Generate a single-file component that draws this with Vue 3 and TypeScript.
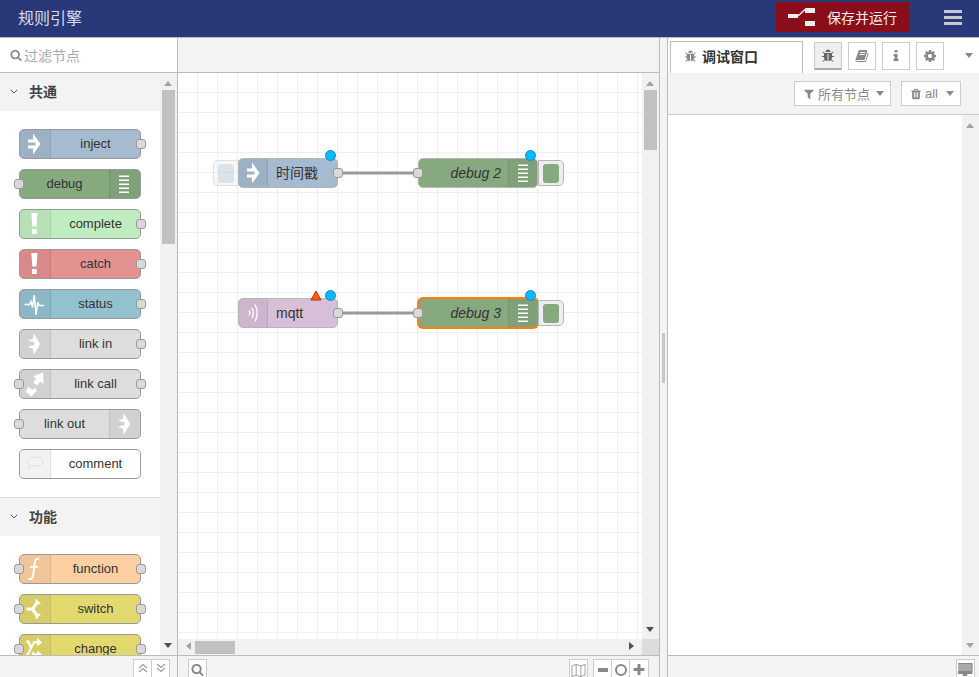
<script setup lang="ts">
interface NodeIcon {
  fill?: string;
  stroke?: string;
  sw?: number;
  color?: string;
}

interface PaletteNode {
  label: string;
  color: string;
  icon: string;
  inPort?: boolean;
  outPort?: boolean;
  iconRight?: boolean;
}

interface CanvasNode extends PaletteNode {
  id: string;
  x: number;
  y: number;
  italic?: boolean;
  selected?: boolean;
  changed?: boolean;
  invalid?: boolean;
  btn?: 'left' | 'right';
}

const debugLines = 'M10 6.5h10V8H10zM10 10.5h10V12H10zM10 14.5h10V16H10zM10 18.5h10V20H10zM10 22.5h10V24H10z';

// 节点图标 (30x30)
const nodeIcons: Record<string, NodeIcon> = {
  inject: { fill: 'M14 4.5L21.5 15 14 25.5v-6H9v-3h7.5v-3H9v-3h5z' },
  debug: { fill: debugLines },
  alert: { fill: 'M12.3 4h6.2l-1 13.5h-4.2zM13 20h4.8v5H13z' },
  status: { stroke: 'M5.5 15.5h5l1.5-3 1.5 6 1.8-12.5 1.700 20 1.800-13 1.200 3.500h5', sw: 1.5 },
  link: { fill: 'M15 4.500L21 15l-6 10.500-1.500-6.500H9l3-2.500h2.200a2 2 0 0 0 0-3.800H12L9 10.500h4.500z' },
  linkcall: { fill: 'M24 3.500l.5 11.500-3.500-2.500-3 4-3.800-2.900 3-4-3-2.300zM9 17.500l4.500 3.500 3-2 1 3-5 5.500-5.500-4.500z' },
  comment: { stroke: 'M16 8c4.500 0 8 1.800 8 4.500S20.500 17 16 17c-1 0-2 0-3-.3L9 20l1-4.200c-1.500-.8-2-2-2-3.300C8 9.800 11.500 8 16 8z', sw: 1, color: '#ddd' },
  func: { stroke: 'M20 4.800c-3.700-.5-4 2-4.500 6.200l-1.300 10c-.4 3.500-2 4.500-4.600 4M11 13h8', sw: 2 },
  switch: { fill: 'M17 4.500l5 5.500-3.500.5-3 4.500 3 4.500 3.500.5-5 5.500-1-4.200-3.700-4.800H7.500v-3h5.300l3.200-4.800z' },
  change: { fill: 'M18 3.500l5 5-5 4v-3h-2.500l-6 12H7.500v-2.500h1l6-12H18zM7.500 6.500H10l2.800 5.500-1.400 2.800-2.900-5.800h-1zM14.200 17l1.300 2.500H18v-3l5 4-5 5v-3h-4l-1.200-2.500z' },
  mqtt: { stroke: 'M11 12.500c.8 1.500.8 3.500 0 5M14 10c1.600 3 1.600 7 0 10M17 6.500c2.800 5 2.800 12 0 17', sw: 1.4 }
};

// font-awesome 4 图标路径
const fa = {
  search: 'M1216 832q0-185-131.5-316.5t-316.5-131.5-316.5 131.5-131.5 316.5 131.5 316.5 316.5 131.5 316.5-131.5 131.5-316.5zm512 832q0 52-38 90t-90 38q-54 0-90-38l-343-342q-179 124-399 124-143 0-273.5-55.5t-225-150-150-225-55.5-273.5 55.5-273.5 150-225 225-150 273.5-55.5 273.5 55.5 225 150 150 225 55.5 273.5q0 220-124 399l343 343q37 37 37 90z',
  filter: 'M1595 295q17 41-14 70l-493 493v742q0 42-39 59-13 5-25 5-27 0-45-19l-256-256q-19-19-19-45v-486l-493-493q-31-29-14-70 17-39 59-39h1280q42 0 59 39z',
  trash: 'M704 1376v-704q0-14-9-23t-23-9h-64q-14 0-23 9t-9 23v704q0 14 9 23t23 9h64q14 0 23-9t9-23zm256 0v-704q0-14-9-23t-23-9h-64q-14 0-23 9t-9 23v704q0 14 9 23t23 9h64q14 0 23-9t9-23zm256 0v-704q0-14-9-23t-23-9h-64q-14 0-23 9t-9 23v704q0 14 9 23t23 9h64q14 0 23-9t9-23zm-544-992h448l-48-117q-7-9-17-11h-317q-10 2-17 11zm928 32v64q0 14-9 23t-23 9h-96v948q0 83-47 143.5t-113 60.5h-832q-66 0-113-58.5t-47-141.5v-952h-96q-14 0-23-9t-9-23v-64q0-14 9-23t23-9h309l70-167q15-37 54-63t79-26h320q40 0 79 26t54 63l70 167h309q14 0 23 9t9 23z',
  bug: 'M1696 960q0 26-19 45t-45 19h-224q0 171-67 290l208 209q19 19 19 45t-19 45q-18 19-45 19t-45-19l-198-197q-5 5-15 13t-42 28.5-65 36.5-82 29-97 13v-896h-128v896q-51 0-101.5-13.5t-87-33-66-39-43.5-32.5l-15-14-183 207q-20 21-48 21-24 0-43-16-19-18-20.5-44.5t15.5-46.5l202-227q-58-114-58-274h-224q-26 0-45-19t-19-45 19-45 45-19h224v-294l-173-173q-19-19-19-45t19-45 45-19 45 19l173 173h844l173-173q19-19 45-19t45 19 19 45-19 45l-173 173v294h224q26 0 45 19t19 45zm-480-576h-640q0-133 93.5-226.5t226.5-93.5 226.5 93.5 93.5 226.5z',
  cog: 'M1152 896q0-106-75-181t-181-75-181 75-75 181 75 181 181 75 181-75 75-181zm512-109v222q0 12-8 23t-20 13l-185 28q-19 54-39 91 35 50 107 138 10 12 10 25t-9 23q-27 37-99 108t-94 71q-12 0-26-9l-138-108q-44 23-91 38-16 136-29 186-7 28-36 28h-222q-14 0-24.5-8.5t-11.5-21.5l-28-184q-49-16-90-37l-141 107q-10 9-25 9-14 0-25-11-126-114-165-168-7-10-7-23 0-12 8-23 15-21 51-66.5t54-70.5q-27-50-41-99l-183-27q-13-2-21-12.5t-8-23.5v-222q0-12 8-23t19-13l186-28q14-46 39-92-40-57-107-138-10-12-10-24 0-10 9-23 26-36 98.5-107.5t94.5-71.5q13 0 26 10l138 107q44-23 91-38 16-136 29-186 7-28 36-28h222q14 0 24.5 8.5t11.5 21.5l28 184q49 16 90 37l142-107q9-9 24-9 13 0 25 10 129 119 165 170 7 8 7 22 0 12-8 23-15 21-51 66.5t-54 70.5q26 50 41 98l183 28q13 2 21 12.5t8 23.5z',
  book: 'M1703 478q40 57 18 129l-275 906q-19 64-76.5 107.5t-122.5 43.5h-923q-77 0-148.5-53.5t-99.5-131.5q-24-67-2-127 0-4 3-27t4-37q1-8-3-21.5t-3-19.5q2-11 8-21t16.5-23.5 16.5-23.5q23-38 45-91.5t30-91.5q3-10 .5-30t-.5-28q3-11 17-28t17-23q21-36 42-92t25-90q1-9-2.5-32t.5-28q4-13 22-30.5t22-22.5q19-26 42.5-84.5t27.5-96.5q1-8-3-25.5t-2-26.5q2-8 9-18t18-23 17-21q8-12 16.5-30.5t15-35 16-36 19.5-32 26.5-23.5 36-11.5 47.5 5.5l-1 3q38-9 51-9h761q74 0 114 56t18 130l-274 906q-36 119-71.5 153.5t-128.5 34.5h-869q-27 0-38 15-11 16-1 43 24 70 144 70h923q29 0 56-15.5t35-41.5l300-987q7-22 5-57 38 15 59 43zm-1064 2q-4 13 2 22.5t20 9.5h608q13 0 25.5-9.5t16.5-22.5l21-64q4-13-2-22.5t-20-9.5h-608q-13 0-25.5 9.5t-16.5 22.5zm-83 256q-4 13 2 22.5t20 9.5h608q13 0 25.5-9.5t16.5-22.5l21-64q4-13-2-22.5t-20-9.5h-608q-13 0-25.5 9.5t-16.5 22.5z',
  info: 'M1216 1344v128q0 26-19 45t-45 19h-512q-26 0-45-19t-19-45v-128q0-26 19-45t45-19h64v-384h-64q-26 0-45-19t-19-45v-128q0-26 19-45t45-19h384q26 0 45 19t19 45v576h64q26 0 45 19t19 45zm-128-1152v192q0 26-19 45t-45 19h-256q-26 0-45-19t-19-45v-192q0-26 19-45t45-19h256q26 0 45 19t19 45z',
  desktop: 'M1728 992v-832q0-13-9.5-22.5t-22.5-9.5h-1600q-13 0-22.5 9.5t-9.5 22.5v832q0 13 9.5 22.5t22.5 9.5h1600q13 0 22.5-9.5t9.5-22.5zm128-832v1088q0 66-47 113t-113 47h-544q0 37 16 77.5t32 71 16 43.5q0 26-19 45t-45 19h-512q-26 0-45-19t-19-45q0-14 16-44t32-70 16-78h-544q-66 0-113-47t-47-113v-1088q0-66 47-113t113-47h1632q66 0 113 47t47 113z',
  plus: 'M1600 736v192q0 40-28 68t-68 28h-416v416q0 40-28 68t-68 28h-192q-40 0-68-28t-28-68v-416h-416q-40 0-68-28t-28-68v-192q0-40 28-68t68-28h416v-416q0-40 28-68t68-28h192q40 0 68 28t28 68v416h416q40 0 68 28t28 68z'
};

const categories: { name: string; nodes: PaletteNode[] }[] = [
  {
    name: '共通',
    nodes: [
      { label: 'inject', color: '#a6bbcf', icon: 'inject', outPort: true },
      { label: 'debug', color: '#87a980', icon: 'debug', inPort: true, iconRight: true },
      { label: 'complete', color: '#c0edc0', icon: 'alert', outPort: true },
      { label: 'catch', color: '#e49191', icon: 'alert', outPort: true },
      { label: 'status', color: '#94c1d0', icon: 'status', outPort: true },
      { label: 'link in', color: '#dddddd', icon: 'link', outPort: true },
      { label: 'link call', color: '#dddddd', icon: 'linkcall', inPort: true, outPort: true },
      { label: 'link out', color: '#dddddd', icon: 'link', inPort: true, iconRight: true },
      { label: 'comment', color: '#ffffff', icon: 'comment' }
    ]
  },
  {
    name: '功能',
    nodes: [
      { label: 'function', color: '#fdd0a2', icon: 'func', inPort: true, outPort: true },
      { label: 'switch', color: '#e2d96e', icon: 'switch', inPort: true, outPort: true },
      { label: 'change', color: '#e2d96e', icon: 'change', inPort: true, outPort: true }
    ]
  }
];

// 画布上的节点，坐标相对于画布
const flowNodes: CanvasNode[] = [
  { id: 'ts', label: '时间戳', color: '#a6bbcf', icon: 'inject', x: 60, y: 85, outPort: true, changed: true, btn: 'left' },
  { id: 'dbg2', label: 'debug 2', color: '#87a980', icon: 'debug', x: 240, y: 85, inPort: true, iconRight: true, italic: true, changed: true, btn: 'right' },
  { id: 'mq', label: 'mqtt', color: '#d8bfd8', icon: 'mqtt', x: 60, y: 225, outPort: true, changed: true, invalid: true },
  { id: 'dbg3', label: 'debug 3', color: '#87a980', icon: 'debug', x: 240, y: 225, inPort: true, iconRight: true, italic: true, selected: true, changed: true, btn: 'right' }
];

const wires = [
  { x1: 165, x2: 235, y: 100 },
  { x1: 165, x2: 235, y: 240 }
];
</script>

<template>
  <div class="editor">
    <header class="topbar">
      <span class="brand">规则引擎</span>
      <button class="deploy">
        <svg class="deploy-icon" viewBox="0 0 27 18" width="27" height="18">
          <path d="M0 6h10v4H0zM17 0h10v5H17zM17 13h10v5H17z" fill="#eee" />
          <path d="M10 8l7-6.5" stroke="#eee" stroke-width="1.5" fill="none" />
        </svg>
        <span>保存并运行</span>
      </button>
      <button class="menu-btn"><i></i><i></i><i></i></button>
    </header>

    <div class="main">
      <aside class="palette">
        <div class="filter">
          <svg class="fa" viewBox="0 0 1792 1792" width="12" height="12"><path :d="fa.search" /></svg>
          <span>过滤节点</span>
        </div>
        <div class="palette-body">
          <div class="palette-list">
            <section v-for="cat in categories" :key="cat.name" class="category">
              <div class="category-head">
                <svg class="chevron" viewBox="0 0 8 5" width="8" height="5"><path d="M.7.7L4 4l3.300-3.300" /></svg>
                <span>{{ cat.name }}</span>
              </div>
              <div class="category-nodes">
                <div v-for="n in cat.nodes" :key="n.label" class="node" :style="{ backgroundColor: n.color }">
                  <div :class="['node-icon', { right: n.iconRight }]">
                    <svg viewBox="0 0 30 30" width="30" height="30">
                      <path v-if="nodeIcons[n.icon].fill" :d="nodeIcons[n.icon].fill" fill="#fff" />
                      <path v-if="nodeIcons[n.icon].stroke" :d="nodeIcons[n.icon].stroke" fill="none" :stroke="nodeIcons[n.icon].color || '#fff'" :stroke-width="nodeIcons[n.icon].sw" />
                    </svg>
                  </div>
                  <span class="node-label">{{ n.label }}</span>
                  <i v-if="n.inPort" class="port in"></i>
                  <i v-if="n.outPort" class="port out"></i>
                </div>
              </div>
            </section>
          </div>
          <div class="vscroll">
            <b class="arrow up"></b>
            <div class="thumb palette-thumb"></div>
            <b class="arrow down"></b>
          </div>
        </div>
        <div class="foot palette-foot">
          <div class="btn-group">
            <button class="foot-btn">
              <svg class="dbl" viewBox="0 0 10 10" width="10" height="10"><path d="M1 5l4-3.500L9 5M1 9l4-3.500L9 9" /></svg>
            </button>
            <button class="foot-btn">
              <svg class="dbl" viewBox="0 0 10 10" width="10" height="10"><path d="M1 1l4 3.500L9 1M1 5l4 3.500L9 5" /></svg>
            </button>
          </div>
        </div>
      </aside>

      <section class="workspace">
        <div class="ws-tabs"></div>
        <div class="ws-chart">
          <div class="canvas">
            <svg class="wires" width="464" height="566">
              <path v-for="(w, i) in wires" :key="i" :d="`M${w.x1} ${w.y}H${w.x2}`" stroke="#999" stroke-width="3" />
            </svg>
            <div v-for="n in flowNodes" :key="n.id" :class="['node', 'flow', { selected: n.selected, wide: n.iconRight }]" :style="{ backgroundColor: n.color, left: n.x + 'px', top: n.y + 'px' }">
              <div v-if="n.btn" :class="['inject-btn', n.btn]">
                <span :style="{ backgroundColor: n.color }"></span>
              </div>
              <div :class="['node-icon', { right: n.iconRight }]">
                <svg viewBox="0 0 30 30" width="30" height="30">
                  <path v-if="nodeIcons[n.icon].fill" :d="nodeIcons[n.icon].fill" fill="#fff" />
                  <path v-if="nodeIcons[n.icon].stroke" :d="nodeIcons[n.icon].stroke" fill="none" stroke="#fff" :stroke-width="nodeIcons[n.icon].sw" />
                </svg>
              </div>
              <span :class="['node-label', { italic: n.italic }]">{{ n.label }}</span>
              <i v-if="n.inPort" class="port in"></i>
              <i v-if="n.outPort" class="port out"></i>
              <svg v-if="n.invalid" class="warn" viewBox="0 0 12 11" width="12" height="11"><path d="M6 1l5 9H1z" fill="#ff5a14" stroke="#b5300a" /></svg>
              <i v-if="n.changed" class="changed"></i>
            </div>
          </div>
          <div class="vscroll">
            <b class="arrow up"></b>
            <div class="thumb chart-thumb"></div>
            <b class="arrow down"></b>
          </div>
          <div class="hscroll">
            <b class="arrow left"></b>
            <div class="hthumb"></div>
            <b class="arrow right"></b>
          </div>
          <div class="corner"></div>
        </div>
        <div class="foot ws-foot">
          <button class="foot-btn">
            <svg class="fa" viewBox="0 0 1792 1792" width="13" height="13"><path :d="fa.search" /></svg>
          </button>
          <span class="spacer"></span>
          <button class="foot-btn">
            <svg class="map" viewBox="0 0 16 16" width="15" height="15"><path d="M1 3l4.500-1.500L10.500 3 15 1.500V13l-4.500 1.500L5.500 13 1 14.500zM5.500 1.500V13M10.500 3v11.500" /></svg>
          </button>
          <div class="btn-group zoom">
            <button class="foot-btn"><i class="minus"></i></button>
            <button class="foot-btn"><i class="ring"></i></button>
            <button class="foot-btn">
              <svg class="fa" viewBox="0 0 1792 1792" width="14" height="14"><path :d="fa.plus" /></svg>
            </button>
          </div>
        </div>
      </section>

      <div class="separator"><i></i></div>

      <aside class="sidebar">
        <div class="side-tabs">
          <div class="tab">
            <svg class="fa" viewBox="0 0 1792 1792" width="13" height="13"><path :d="fa.bug" /></svg>
            <span>调试窗口</span>
          </div>
          <button class="tab-btn active"><svg class="fa dark" viewBox="0 0 1792 1792" width="14" height="14"><path :d="fa.bug" /></svg></button>
          <button class="tab-btn"><svg class="fa" viewBox="0 0 1792 1792" width="14" height="14"><path :d="fa.book" /></svg></button>
          <button class="tab-btn"><svg class="fa" viewBox="0 0 1792 1792" width="14" height="14"><path :d="fa.info" /></svg></button>
          <button class="tab-btn"><svg class="fa" viewBox="0 0 1792 1792" width="14" height="14"><path :d="fa.cog" /></svg></button>
          <b class="caret tab-caret"></b>
        </div>
        <div class="side-toolbar">
          <button class="tool-btn nodes-filter">
            <svg class="fa" viewBox="0 0 1792 1792" width="12" height="12"><path :d="fa.filter" /></svg>
            <span>所有节点</span>
            <b class="caret"></b>
          </button>
          <button class="tool-btn clear-all">
            <svg class="fa" viewBox="0 0 1792 1792" width="12" height="12"><path :d="fa.trash" /></svg>
            <span>all</span>
            <b class="caret"></b>
          </button>
        </div>
        <div class="side-body">
          <div class="side-content"></div>
          <div class="vscroll side-scroll">
            <b class="arrow up"></b>
            <b class="arrow down"></b>
          </div>
        </div>
        <div class="foot side-foot">
          <button class="foot-btn monitor">
            <svg class="fa" viewBox="0 0 1920 1792" width="15" height="14">
              <rect x="90" y="120" width="1740" height="900" fill="#aaa" />
              <path :d="fa.desktop" />
            </svg>
          </button>
        </div>
      </aside>
    </div>
  </div>
</template>

<style scoped>
.editor {
  width: 979px;
  height: 677px;
  overflow: hidden;
  display: flex;
  flex-direction: column;
  font-family: "Liberation Sans", "Noto Sans CJK SC", sans-serif;
  font-size: 14px;
  color: #333;
  background: #fff;
}

button {
  font-family: inherit;
  margin: 0;
  padding: 0;
  cursor: pointer;
}

/* 顶部栏 */
.topbar {
  flex: none;
  height: 38px;
  box-sizing: border-box;
  display: flex;
  align-items: flex-start;
  background: #283878;
  border-bottom: 1px solid #bbb;
}

.brand {
  margin: 9px 0 0 18px;
  font-size: 16px;
  line-height: 20px;
  color: #d9dce8;
}

.deploy {
  margin: 2px 0 0 auto;
  width: 133px;
  height: 30px;
  display: flex;
  align-items: center;
  padding-left: 12px;
  border: none;
  background: #8a0e1a;
  color: #eee;
  font-size: 14px;
}

.deploy-icon { margin-right: 12px; }

.menu-btn {
  width: 18px;
  margin: 10px 17px 0 35px;
  display: flex;
  flex-direction: column;
  gap: 3px;
  border: none;
  background: none;
}

.menu-btn i {
  display: block;
  height: 3px;
  width: 18px;
  background: #c8c8d0;
}

.main {
  flex: 1;
  display: flex;
  min-height: 0;
}

/* 左侧节点面板 */
.palette {
  width: 178px;
  box-sizing: border-box;
  border-right: 1px solid #bbb;
  display: flex;
  flex-direction: column;
  flex: none;
}

.filter {
  flex: none;
  height: 35px;
  box-sizing: border-box;
  display: flex;
  align-items: center;
  gap: 2px;
  padding-left: 10px;
  border-bottom: 1px solid #bbb;
  color: #aaa;
  font-size: 14px;
}

.fa { fill: #888; flex: none; }
.fa.dark { fill: #666; }

.palette-body {
  flex: 1;
  min-height: 0;
  display: flex;
}

.palette-list {
  width: 160px;
  overflow: hidden;
}

.category + .category { border-top: 1px solid #ddd; }

.category-head {
  height: 38px;
  box-sizing: border-box;
  padding-bottom: 2px;
  display: flex;
  align-items: center;
  background: #f3f3f3;
  font-weight: 700;
  font-size: 14px;
  color: #444;
}

.chevron {
  margin: 0 11px 0 10px;
  fill: none;
  stroke: #555;
  stroke-width: 1;
}

.category-nodes {
  padding: 18px 0;
  display: flex;
  flex-direction: column;
  gap: 10px;
  align-items: flex-start;
}

/* 节点 */
.node {
  position: relative;
  flex: none;
  width: 122px;
  height: 30px;
  margin-left: 19px;
  box-sizing: border-box;
  border: 1px solid #999;
  border-radius: 5px;
  display: flex;
  font-size: 13px;
  line-height: 28px;
  color: #333;
}

.node-icon {
  flex: none;
  width: 30px;
  height: 28px;
  border-right: 1px solid rgba(0, 0, 0, 0.08);
  background: rgba(0, 0, 0, 0.05);
  border-radius: 4px 0 0 4px;
}

.node-icon svg {
  display: block;
  margin: -1px 0 0 -1px;
}

.node-icon.right {
  order: 2;
  border-right: none;
  border-left: 1px solid rgba(0, 0, 0, 0.08);
  border-radius: 0 4px 4px 0;
}

.node-label {
  flex: 1;
  text-align: center;
  white-space: nowrap;
}

.port {
  position: absolute;
  top: 9px;
  width: 10px;
  height: 10px;
  box-sizing: border-box;
  background: #d9d9d9;
  border: 1px solid #999;
  border-radius: 3px;
}

.port.in { left: -6px; }
.port.out { right: -6px; }

/* 滚动条 */
.vscroll {
  position: relative;
  flex: none;
  width: 17px;
  background: #f1f1f1;
}

.thumb {
  position: absolute;
  left: 2px;
  width: 13px;
  background: #c1c1c1;
}

.palette-thumb { top: 17px; height: 154px; }
.chart-thumb { top: 17px; height: 60px; }

.arrow {
  position: absolute;
  width: 0;
  height: 0;
  border: 4px solid transparent;
}

.arrow.up { top: 4px; left: 4px; border-bottom: 5px solid #a3a3a3; border-left-width: 4.5px; border-right-width: 4.5px; }
.arrow.down { bottom: 3px; left: 4px; border-top: 5px solid #505050; border-left-width: 4.5px; border-right-width: 4.5px; }
.arrow.left { left: 4px; top: 3px; border-right: 5px solid #a3a3a3; border-top-width: 4.5px; border-bottom-width: 4.5px; }
.arrow.right { right: 4px; top: 3px; border-left: 5px solid #505050; border-top-width: 4.5px; border-bottom-width: 4.5px; }

.side-scroll .arrow.down { border-top-color: #a3a3a3; }

/* 工作区 */
.workspace {
  flex: none;
  width: 482px;
  box-sizing: border-box;
  border-right: 1px solid #bbb;
  display: flex;
  flex-direction: column;
}

.ws-tabs {
  flex: none;
  height: 35px;
  box-sizing: border-box;
  background: #f3f3f3;
  border-bottom: 1px solid #bbb;
}

.ws-chart {
  flex: 1;
  min-height: 0;
  display: grid;
  grid-template-columns: 1fr 17px;
  grid-template-rows: 1fr 16px;
}

.canvas {
  position: relative;
  overflow: hidden;
  background-color: #fff;
  background-image:
    linear-gradient(to right, transparent 19px, #eee 19px),
    linear-gradient(to bottom, transparent 19px, #eee 19px);
  background-size: 20px 20px;
}

.wires {
  position: absolute;
  left: 0;
  top: 0;
}

.node.flow {
  position: absolute;
  width: 100px;
  margin-left: 0;
  font-size: 14px;
  border-color: #b5b5b5;
}

.node.flow.wide { width: 120px; }

.flow .node-icon { width: 28px; }

.flow .node-label {
  text-align: left;
  padding-left: 8px;
}

.flow .node-icon.right + .node-label {
  text-align: right;
  padding: 0 7px 0 0;
}

.node.flow.selected {
  border-color: #ff7f0e;
  box-shadow: 0 0 0 1px #ff7f0e;
}

.node-label.italic { font-style: italic; }

.inject-btn {
  position: absolute;
  top: 1px;
  width: 26px;
  height: 26px;
  box-sizing: border-box;
  background: #eee;
  border: 1px solid #b5b5b5;
  display: flex;
  align-items: center;
  justify-content: center;
}

.inject-btn span {
  display: block;
  width: 16px;
  height: 19px;
  border-radius: 3px;
}

.inject-btn.right {
  left: 119px;
  border-radius: 0 5px 5px 0;
}

.inject-btn.left {
  left: -26px;
  border-radius: 5px 0 0 5px;
  opacity: 0.4;
}

.changed {
  position: absolute;
  top: -9px;
  right: 1px;
  width: 11px;
  height: 11px;
  box-sizing: border-box;
  border-radius: 50%;
  background: #00bcff;
  border: 1px solid #1a86c8;
}

.warn {
  position: absolute;
  top: -9px;
  right: 15px;
}

.hscroll {
  position: relative;
  background: #f1f1f1;
}

.hthumb {
  position: absolute;
  left: 17px;
  top: 2px;
  width: 40px;
  height: 13px;
  background: #c1c1c1;
}

.corner { background: #dcdcdc; }

/* 底部工具栏 */
.foot {
  flex: none;
  height: 22px;
  box-sizing: border-box;
  background: #f3f3f3;
  border-top: 1px solid #bbb;
  display: flex;
  align-items: flex-start;
  overflow: hidden;
}

.btn-group { display: flex; }

.palette-foot { justify-content: flex-end; padding: 3px 7px 0 0; }

.foot-btn {
  width: 19px;
  height: 24px;
  box-sizing: border-box;
  flex: none;
  display: flex;
  align-items: flex-start;
  justify-content: center;
  padding-top: 3px;
  background: #fff;
  border: 1px solid #ccc;
}

.btn-group .foot-btn + .foot-btn { margin-left: -1px; }

.dbl {
  fill: none;
  stroke: #999;
  stroke-width: 1.2;
}

.ws-foot { padding: 3px 10px 0 10px; }

.spacer { flex: 1; }

.map {
  fill: none;
  stroke: #999;
  stroke-width: 1;
}

.zoom { margin-left: 5px; }
.zoom .foot-btn:last-child { width: 20px; }

.minus {
  display: block;
  width: 10px;
  height: 4px;
  margin-top: 5px;
  background: #888;
}

.ring {
  display: block;
  width: 12px;
  height: 12px;
  margin-top: 1px;
  box-sizing: border-box;
  border: 2px solid #888;
  border-radius: 50%;
}

/* 分隔条 */
.separator {
  flex: none;
  width: 8px;
  box-sizing: border-box;
  border-right: 1px solid #bbb;
  background: #f3f3f3;
  display: flex;
  align-items: center;
  padding-left: 2px;
}

.separator i {
  display: block;
  width: 3px;
  height: 50px;
  background: #c8c8c8;
}

/* 右侧边栏 */
.sidebar {
  flex: 1;
  min-width: 0;
  display: flex;
  flex-direction: column;
}

.side-tabs {
  flex: none;
  height: 35px;
  position: relative;
  display: flex;
  align-items: flex-start;
  gap: 6px;
  background: #fff;
}

.tab {
  width: 133px;
  height: 32px;
  margin: 3px 5px 0 2px;
  padding: 0 0 3px 13px;
  box-sizing: border-box;
  border: 1px solid #bbb;
  border-bottom: none;
  display: flex;
  align-items: center;
  gap: 5px;
  font-weight: 700;
  font-size: 14px;
  color: #333;
}

.tab-btn {
  width: 28px;
  height: 28px;
  margin-top: 4px;
  box-sizing: border-box;
  background: #fff;
  border: 1px solid #ccc;
  display: flex;
  align-items: center;
  justify-content: center;
}

.tab-btn.active {
  background: #efefef;
  border-bottom: 2px solid #aaa;
}

.caret {
  display: block;
  width: 0;
  height: 0;
  border-left: 4.5px solid transparent;
  border-right: 4.5px solid transparent;
  border-top: 5px solid #888;
}

.tab-caret { margin: 15px 0 0 15px; }

.side-toolbar {
  flex: none;
  height: 42px;
  box-sizing: border-box;
  background: #f3f3f3;
  border-bottom: 1px solid #ccc;
  display: flex;
  justify-content: flex-end;
  gap: 10px;
  padding: 8px 18px 0 0;
}

.tool-btn {
  height: 25px;
  box-sizing: border-box;
  background: #fff;
  border: 1px solid #ccc;
  display: flex;
  align-items: center;
  padding: 0 6px 0 8px;
  gap: 3px;
  font-size: 13px;
  color: #888;
}

.nodes-filter { width: 97px; }
.clear-all { width: 60px; }

.tool-btn .caret { margin-left: auto; }

.side-body {
  flex: 1;
  min-height: 0;
  display: flex;
}

.side-content { flex: 1; }

.side-foot { justify-content: flex-end; padding: 3px 4px 0 0; }
</style>
